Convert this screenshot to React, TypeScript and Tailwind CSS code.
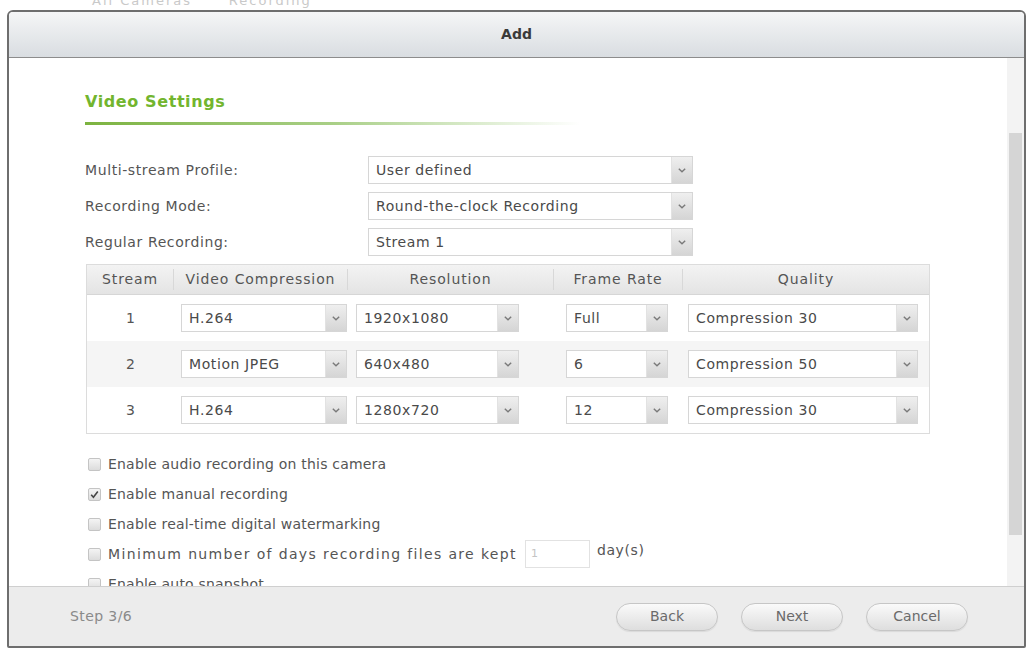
import React from "react";

const Chevron = () => (
  <svg width="8" height="5" viewBox="0 0 8 5">
    <path d="M0.8 0.8 L4 3.8 L7.2 0.8" fill="none" stroke="#7a7a7a" strokeWidth="1.4" />
  </svg>
);

const Select = ({ value, className }: { value: string; className: string }) => (
  <div className={`flex h-[28px] border border-[#d6d6d6] bg-white ${className}`}>
    <span className="flex-1 truncate pl-[7px] text-[14px] leading-[26px] tracking-[0.6px] text-[#4a4a4a]">{value}</span>
    <span className="flex w-[21px] items-center justify-center border-l border-[#e2e2e2] bg-linear-to-b from-[#efefef] to-[#d5d5d5]">
      <Chevron />
    </span>
  </div>
);

const Checkbox = ({ checked }: { checked?: boolean }) => (
  <span className="flex h-[13px] w-[13px] items-center justify-center rounded-[2px] border border-[#c4c4c4] bg-linear-to-b from-[#f4f4f4] to-[#dcdcdc]">
    {checked && (
      <svg width="9" height="9" viewBox="0 0 9 9">
        <path d="M1.2 4.8 L3.4 7.2 L7.8 1.4" fill="none" stroke="#444" strokeWidth="1.6" />
      </svg>
    )}
  </span>
);

const rows = [
  { n: "1", vc: "H.264", res: "1920x1080", fr: "Full", q: "Compression 30" },
  { n: "2", vc: "Motion JPEG", res: "640x480", fr: "6", q: "Compression 50" },
  { n: "3", vc: "H.264", res: "1280x720", fr: "12", q: "Compression 30" },
];

const options = [
  { label: "Enable audio recording on this camera", checked: false },
  { label: "Enable manual recording", checked: true },
  { label: "Enable real-time digital watermarking", checked: false },
];

export default function App() {
  return (
    <div className="h-[651px] w-[1028px] overflow-hidden bg-white font-['DejaVu_Sans',sans-serif]">
      <div className="h-[10px] overflow-hidden pl-[92px]">
        <div className="-mt-[9px] text-[13px] tracking-[2px] text-[#c9c9c9]">All Cameras&nbsp;&nbsp;&nbsp;&nbsp;&nbsp;&nbsp;Recording</div>
      </div>

      <div className="ml-[7px] flex h-[638px] w-[1019px] flex-col overflow-hidden rounded-t-[6px] rounded-b-[2px] border-2 border-[#6e6e6e]">
        {/* title bar */}
        <div className="flex h-[46px] shrink-0 items-center justify-center border-b border-[#8c8c8c] bg-linear-to-b from-[#f5f6f7] to-[#d9dde1] text-[14px] font-bold text-[#3a3a3a]">
          Add
        </div>

        {/* body */}
        <div className="flex min-h-0 flex-1">
          <div className="flex-1 overflow-hidden bg-white pl-[76px] pt-[34px]">
            <div className="text-[16px] font-bold leading-[20px] tracking-[0.6px] text-[#72b52e]">Video Settings</div>
            <div className="mt-[10px] h-[3px] w-[495px] bg-linear-to-r from-[#7cb33f] via-[#a9cf86] to-white" />

            <div className="mt-[31px] flex flex-col gap-[8px] text-[14px] text-[#555]">
              {[
                ["Multi-stream Profile:", "User defined"],
                ["Recording Mode:", "Round-the-clock Recording"],
                ["Regular Recording:", "Stream 1"],
              ].map(([label, value]) => (
                <div key={label} className="flex items-center">
                  <span className="w-[283px] tracking-[0.6px]">{label}</span>
                  <Select value={value} className="w-[325px]" />
                </div>
              ))}
            </div>

            <div className="ml-[1px] mt-[8px] w-[844px] border border-[#dcdcdc] text-[14px] text-[#555]">
              <div className="flex h-[30px] items-center border-b border-[#d6d6d6] bg-linear-to-b from-[#f3f3f3] to-[#e4e4e4] tracking-[0.9px]">
                <span className="w-[87px] border-r border-[#d8d8d8] text-center">Stream</span>
                <span className="w-[174px] border-r border-[#d8d8d8] text-center">Video Compression</span>
                <span className="w-[206px] border-r border-[#d8d8d8] text-center">Resolution</span>
                <span className="w-[129px] border-r border-[#d8d8d8] text-center">Frame Rate</span>
                <span className="flex-1 text-center">Quality</span>
              </div>
              {rows.map((r, i) => (
                <div key={r.n} className={`flex h-[46px] items-center ${i === 1 ? "bg-[#f5f5f5]" : "bg-white"}`}>
                  <span className="w-[87px] text-center">{r.n}</span>
                  <div className="w-[174px] pl-[7px]">
                    <Select value={r.vc} className="w-[166px]" />
                  </div>
                  <div className="w-[206px] pl-[8px]">
                    <Select value={r.res} className="w-[163px]" />
                  </div>
                  <div className="w-[129px] pl-[12px]">
                    <Select value={r.fr} className="w-[102px]" />
                  </div>
                  <div className="flex-1 pl-[5px]">
                    <Select value={r.q} className="w-[230px]" />
                  </div>
                </div>
              ))}
            </div>

            <div className="mt-[15px] flex flex-col text-[14px] text-[#555]">
              {options.map((o) => (
                <div key={o.label} className="flex h-[30px] items-center pl-[3px]">
                  <Checkbox checked={o.checked} />
                  <span className="ml-[7px] tracking-[0.2px]">{o.label}</span>
                </div>
              ))}
              <div className="flex h-[30px] items-center pl-[3px]">
                <Checkbox />
                <span className="ml-[7px] tracking-[1.35px]">Minimum number of days recording files are kept</span>
                <span className="ml-[8px] flex h-[28px] w-[65px] items-center border border-[#e2e2e2] bg-white pl-[5px] text-[11px] text-[#c4c4c4]">1</span>
                <span className="ml-[7px] -mt-[8px] tracking-[0.6px]">day(s)</span>
              </div>
              <div className="flex h-[30px] items-center pl-[3px]">
                <Checkbox />
                <span className="ml-[7px] tracking-[0.2px]">Enable auto snapshot</span>
              </div>
            </div>
          </div>

          {/* scrollbar */}
          <div className="flex w-[17px] shrink-0 flex-col bg-[#f3f3f3] pl-[2px]">
            <div className="h-[75px]" />
            <div className="h-[402px] w-[13px] bg-[#d5d5d5]" />
          </div>
        </div>

        {/* footer */}
        <div className="flex h-[60px] shrink-0 items-center border-t border-[#cfcfcf] bg-[#ececec] pl-[61px] pr-[56px]">
          <span className="text-[14px] tracking-[0.4px] text-[#8a8a8a]">Step 3/6</span>
          <div className="ml-auto flex gap-[23px]">
            {["Back", "Next", "Cancel"].map((b) => (
              <button
                key={b}
                className="h-[28px] w-[102px] rounded-full border border-[#c6c6c6] bg-linear-to-b from-[#fafafa] to-[#dedede] text-[14px] text-[#6a6a6a] shadow-[0_1px_1px_rgba(0,0,0,0.08)]"
              >
                {b}
              </button>
            ))}
          </div>
        </div>
      </div>
    </div>
  );
}
